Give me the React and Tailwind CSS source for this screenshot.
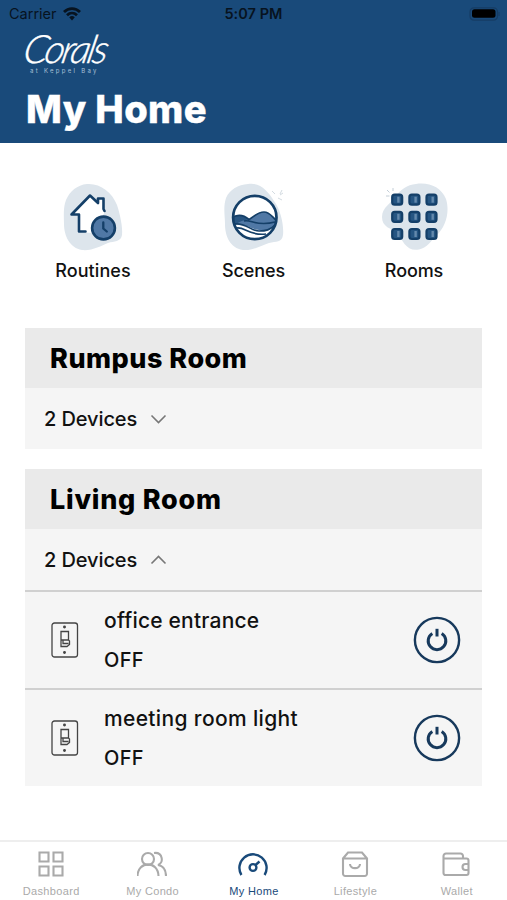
import { useState } from "react";

const RoutinesIcon = () => (
  <svg width="66" height="72" viewBox="0 0 66 72" fill="none">
    <path d="M27 1C40 0 52 9 57 22C60 31 63 45 62 52C61 59 54 58 48 60C41 63 32 68 22 67C10 65 4 53 4 41C4 33 3 25 6 17C10 8 17 2 27 1Z" fill="#dde5ec" />
    <path d="M19 49V32H11.5L31 13.5L38 20V15.5H43.5V27L45 29L40 37L32 50Z" fill="#fff" />
    <path d="M25.5 48.5H19V31.5H11.5L30 12.5L38 20V15.5H43.5V26L44.5 28" stroke="#143f68" strokeWidth="2.6" strokeLinejoin="round" strokeLinecap="round" />
    <circle cx="43.5" cy="45" r="11.4" fill="#5078a5" stroke="#143f68" strokeWidth="2.6" />
    <path d="M43.3 39.5V45.5L46.8 48.5" stroke="#143f68" strokeWidth="2.3" strokeLinecap="round" />
  </svg>
);

const ScenesIcon = () => (
  <svg width="66" height="72" viewBox="0 0 66 72" fill="none">
    <path d="M27 1C39 -1 47 8 53 18C60 27 63 43 62 52C61 60 55 58 48 60C41 62 32 68 22 67C9 65 4 53 4 41C4 33 2 24 5 15C9 6 17 2 27 1Z" fill="#dde5ec" />
    <circle cx="33.8" cy="34.5" r="21.5" fill="#fff" />
    <path d="M12 34C18 31 23 33 28 36.5C33 34 36 29 43 29C49 29 51 34 55.5 37L54 42C50 46 44 49 38 47C29 46 26 40 12 41Z" fill="#5078a5" />
    <path d="M12 34C18 31 23 33 28 36.5C23 37 18 38 15 42L12 41Z" fill="#285582" />
    <path d="M12 34C18 31 24 33 28 36.5C33 34 36 29 43 29C49 29 51 34 55 37M12.5 41C25 39 29 48 38 48C45 48 49 47 54 42M23 38C30 36 35 44 54 39M16 45C24 44 28 53 45 51" stroke="#143f68" strokeWidth="1.7" />
    <circle cx="33.8" cy="34.5" r="21.7" stroke="#143f68" strokeWidth="2.7" />
    <path d="M51 8L54 11M61 7L59 11M57 15L61 17M59 12L62 10" stroke="#d3dbe1" />
  </svg>
);

const RoomsIcon = () => (
  <svg className="translate-x-[1px]" width="70" height="72" viewBox="0 0 70 72" fill="none">
    <path d="M36 1C49 -1 61 4 66 16C70 29 66 44 56 53C50 59 48 64 39 66.5C27 69 22 58 18 49C11 46 2 44 2 34C2 24 12 20 15 14C21 6 27 2 36 1Z" fill="#dde5ec" />
    {[16.7, 33.8, 51].map((y) =>
      [17.2, 34.4, 51.5].map((x) => (
        <g key={`${x}-${y}`}>
          <rect x={x - 5} y={y - 5} width="10" height="10" rx="2.5" fill="#255582" stroke="#143f68" strokeWidth="2.2" />
          <path d={`M${x + 1.2} ${y - 3}v6`} stroke="#6489ac" strokeWidth="2.4" />
        </g>
      ))
    )}
    <path d="M7 7L9.5 9.5M13 5V8M6 13H9.5" stroke="#c3ced7" />
  </svg>
);

const SwitchIcon = () => (
  <svg width="28" height="36" viewBox="0 0 28 36" fill="none" stroke="#444" strokeWidth="1.3">
    <rect x="1" y="1" width="25.5" height="34" rx="2.5" />
    <path d="M10 9.5H17.5V18H10ZM10 18V24.5H16L18.5 22.5V19L17.5 18M12 18.5V21.5H17.5" />
    <circle cx="13.5" cy="5" r=".8" fill="#444" />
    <circle cx="13.5" cy="30.5" r=".8" fill="#444" />
  </svg>
);

const PowerIcon = () => (
  <svg width="48" height="48" viewBox="0 0 48 48" fill="none" stroke="#17395c">
    <circle cx="24" cy="24" r="22.1" strokeWidth="2.4" />
    <path d="M19.3 17.4A8.8 8.8 0 1 0 28.7 17.4" strokeWidth="3" />
    <path d="M24 12.8V20.5" strokeWidth="3" />
  </svg>
);

const Chevron = ({ up }) => (
  <svg width="17" height="10" viewBox="0 0 16 10" fill="none" stroke="#777" strokeWidth="1.6">
    <path d={up ? "M1 8.5L8 1.5L15 8.5" : "M1 1.5L8 8.5L15 1.5"} />
  </svg>
);

const tabIcons = {
  Dashboard: <path d="M2.5 2.5H11.5V11.5H2.5ZM16.5 2.5H25.5V11.5H16.5ZM2.5 16.5H11.5V25.5H2.5ZM16.5 16.5H25.5V25.5H16.5Z" />,
  "My Condo": (
    <>
      <circle cx="10" cy="9" r="6" />
      <path d="M-.5 26C0 10.5 20 10.5 20.5 26M16 3C25 2 26 13 20 15C26 16 28 20 28 26" />
    </>
  ),
  "My Home": (
    <>
      <path d="M2.4 25A13.6 13.6 0 1 1 25.6 25" strokeWidth="2.4" />
      <circle cx="14" cy="17.5" r="3.4" strokeWidth="2.4" />
      <path d="M16.5 15L20.5 11.5" strokeWidth="2.4" />
    </>
  ),
  Lifestyle: (
    <>
      <path d="M2 8.5L7 2.5H21L26 8.5V23A2.5 2.5 0 0 1 23.5 26H4.5A2.5 2.5 0 0 1 2 23ZM2 8.5H26" />
      <path d="M9 14C9 19.5 19 19.5 19 14" />
    </>
  ),
  Wallet: (
    <>
      <path d="M1.5 8.5V6A2.5 2.5 0 0 1 4 3.5H18.5A2.5 2.5 0 0 1 21 6V8.5M1.5 8.5H24.5A2 2 0 0 1 26.5 10.5V23A2 2 0 0 1 24.5 25H3.5A2 2 0 0 1 1.5 23Z" />
      <path d="M26.5 14H23.5A3 3 0 0 0 23.5 20H26.5" />
    </>
  ),
};

const shortcuts = [
  { name: "Routines", icon: <RoutinesIcon />, spacing: "tracking-[0.1px]" },
  { name: "Scenes", icon: <ScenesIcon />, spacing: "tracking-[-0.1px]" },
  { name: "Rooms", icon: <RoomsIcon />, spacing: "tracking-[-0.1px]" },
];

const RoomCard = ({ name, spacing, devices, defaultOpen }) => {
  const [open, setOpen] = useState(defaultOpen);

  return (
    <section className="bg-[#f5f5f5]">
      <h2 className={`h-[60.5px] bg-[#eaeaea] pl-[25px] text-[27px] leading-[61px] font-extrabold text-black ${spacing}`}>
        {name}
      </h2>
      <button onClick={() => setOpen(!open)} className="flex h-[61px] w-full items-center pt-px pl-[19px]">
        <span className="w-[106px] text-left text-[20px] font-medium tracking-[-0.1px] whitespace-nowrap">2 Devices</span>
        <Chevron up={open} />
      </button>
      {open &&
        devices.map((device) => (
          <div key={device.name} className="flex h-[98px] items-center border-t-2 border-[#d0d0d0] pr-[21px] pl-[26px]">
            <SwitchIcon />
            <div className="flex flex-1 flex-col gap-[9px] pt-px pl-[25px] font-medium">
              <p className={`text-[21px] leading-[30px] whitespace-nowrap ${device.spacing}`}>{device.name}</p>
              <p className="text-[20px] leading-[30px] tracking-[0.3px]">OFF</p>
            </div>
            <button aria-label="Power"><PowerIcon /></button>
          </div>
        ))}
    </section>
  );
};

const App = () => {
  const [tab, setTab] = useState("My Home");

  return (
    <div className="flex h-[900px] w-[507px] flex-col overflow-hidden bg-white font-['Inter',sans-serif] text-[#111]">
      <header className="h-[142.5px] shrink-0 bg-[#194a7a] text-white">
        <div className="grid h-7 grid-cols-3 items-center px-[9px] text-[14.5px] text-[#07131f]">
          <div className="flex items-center gap-[6px]">
            <span>Carrier</span>
            <svg width="18" height="14" viewBox="0 0 18 14" fill="none" stroke="#07131f" strokeWidth="2.8">
              <path d="M1 5C5.5 .5 12.5 .5 17 5M4 8.2C7 5.4 11 5.4 14 8.2" />
              <path d="M6.2 10.2Q9 8 11.8 10.2L9 13.4Z" fill="#07131f" stroke="none" />
            </svg>
          </div>
          <span className="text-center font-semibold tracking-[0.05px] whitespace-nowrap">5:07 PM</span>
          <svg className="-mr-[3px] justify-self-end" width="32" height="14" viewBox="0 0 32 14">
            <rect x="1" y=".8" width="27.5" height="12.4" rx="4" fill="#194a7a" stroke="#163d64" strokeWidth="1.2" />
            <rect x="3" y="2.2" width="23.5" height="8.6" rx="2.5" fill="#000" />
            <path d="M30 5V9" stroke="#163d64" />
          </svg>
        </div>
        <div className="h-[57px] pl-[25px]">
          <p className="h-[38px] w-fit origin-left -skew-x-12 font-['Lato'] text-[39px] leading-[41px] font-light italic tracking-[-2.8px] [-webkit-text-stroke:0.4px_white]">Corals</p>
          <p className="pl-[5px] text-[6px] leading-[10px] tracking-[2.3px] text-[#a9c0d6]">at Keppel Bay</p>
        </div>
        <h1 className="-mt-[1px] pl-[26px] text-[38px] leading-[50px] font-extrabold tracking-[0.4px] [-webkit-text-stroke:0.4px_white]">My Home</h1>
      </header>

      <nav className="flex justify-between px-[43px] pt-[40px]">
        {shortcuts.map((item) => (
          <button key={item.name} className="flex w-[100px] flex-col items-center">
            {item.icon}
            <span className={`mt-[3.5px] text-[18px] leading-[26px] font-medium ${item.spacing}`}>{item.name}</span>
          </button>
        ))}
      </nav>

      <main className="mt-[43.5px] flex flex-1 flex-col gap-[19.5px] px-[25px]">
        <RoomCard name="Rumpus Room" spacing="tracking-[0.5px]" devices={[]} />
        <RoomCard
          name="Living Room"
          spacing="tracking-[0.75px]"
          defaultOpen
          devices={[
            { name: "office entrance", spacing: "tracking-[0.2px]" },
            { name: "meeting room light", spacing: "tracking-[0.35px]" },
          ]}
        />
      </main>

      <footer className="grid h-[60.5px] shrink-0 grid-cols-5 border-t-2 border-[#eee] bg-white">
        {Object.entries(tabIcons).map(([name, icon]) => (
          <button
            key={name}
            onClick={() => setTab(name)}
            className={`flex flex-col items-center pt-[7px] ${name === tab ? "text-[#194a7a]" : "text-[#aaa]"}`}
          >
            <svg width="30" height="30" viewBox="-1 -1 30 30" fill="none" stroke="currentColor" strokeWidth="2.1">
              {icon}
            </svg>
            <span className="mt-[4px] pl-px font-['Liberation_Sans'] text-[11px] leading-[16px] tracking-[0.35px]">{name}</span>
          </button>
        ))}
      </footer>
    </div>
  );
};

export default App;
